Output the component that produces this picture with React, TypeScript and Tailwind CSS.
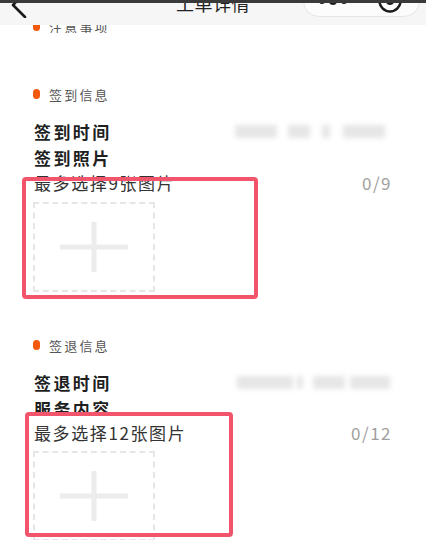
import React from 'react';

const FONT = { fontFamily: '"Noto Sans CJK SC", "Noto Sans", sans-serif' };

const Dot = () => <span className="w-[7px] h-[10px] rounded-full bg-[#f2590c] shrink-0" />;

const SectionLabel: React.FC<{ text: string }> = ({ text }) => (
  <div className="h-[14px] flex items-center gap-[9px] pl-[33px]">
    <Dot />
    <span className="text-[13px] leading-none tracking-[2.2px] text-[#555]">{text}</span>
  </div>
);

const Blurred: React.FC<{ parts: [number, number][] }> = ({ parts }) => (
  <div className="flex items-center blur-[2.5px]">
    {parts.map(([gap, w], i) => (
      <div key={i} className="h-[13px] bg-[#e6e6e6]" style={{ width: w, marginLeft: gap }} />
    ))}
  </div>
);

const FieldRow: React.FC<{ label: string; value?: [number, number][]; right?: string }> = ({ label, value, right = 'pr-[40px]' }) => (
  <div className={`h-[26px] flex items-center justify-between pl-[34px] ${right}`}>
    <span className="text-[17px] leading-none font-bold tracking-[2.4px] text-[#1f1f1f]">{label}</span>
    {value && <Blurred parts={value} />}
  </div>
);

const UploadHint: React.FC<{ max: number }> = ({ max }) => (
  <div className="h-[24px] flex items-center justify-between pl-[34px] pr-[34px]">
    <span className="text-[17px] leading-none tracking-[1.6px] text-[#333]">最多选择{max}张图片</span>
    <span className="text-[17px] leading-none tracking-[1.5px] text-[#a0a0a0]">0/{max}</span>
  </div>
);

const UploadBox = () => (
  <div className="ml-[33px] w-[122px] h-[90px] border-2 border-dashed border-[#e6e6e6] flex items-center justify-center">
    <svg width="68" height="50" viewBox="0 0 68 50">
      <rect x="0" y="22.5" width="68" height="5" fill="#ececec" />
      <rect x="31.5" y="0" width="5" height="50" fill="#ececec" />
    </svg>
  </div>
);

export default function App() {
  return (
    <div className="relative w-[426px] h-[540px] overflow-hidden bg-white" style={FONT}>
      <div className="h-[3px] bg-[#3a3a3a]" />

      {/* nav bar, scrolled partly out of view */}
      <header className="h-[22px] overflow-hidden bg-[#f6f6f6] flex items-end relative z-10">
        <div className="h-[44px] w-full shrink-0 grid grid-cols-[1fr_auto_1fr] items-center">
          <div className="pl-[10px]">
            <svg width="20" height="30" viewBox="0 0 20 30">
              <path d="M15 5 L3 17 L15 29" fill="none" stroke="#1a1a1a" strokeWidth="2.6" strokeLinecap="round" strokeLinejoin="round" />
            </svg>
          </div>
          <span className="text-[18px] tracking-[0.5px] leading-none text-[#222]">工单详情</span>
          <div className="flex justify-end self-end mb-[8px] pr-[6px]">
            <div className="w-[117px] h-[32px] rounded-full border border-[#e6e6e6] bg-[#fcfcfc] flex items-center justify-between pl-[14px] pr-[16px]">
              <svg width="30" height="10" viewBox="0 0 30 10">
                <circle cx="4" cy="5" r="3" fill="#1a1a1a" />
                <circle cx="15" cy="5" r="4" fill="#1a1a1a" />
                <circle cx="26" cy="5" r="3" fill="#1a1a1a" />
              </svg>
              <svg width="26" height="26" viewBox="0 0 26 26">
                <circle cx="13" cy="13" r="10.5" fill="none" stroke="#1a1a1a" strokeWidth="2.5" />
                <circle cx="13" cy="13" r="4" fill="#1a1a1a" />
              </svg>
            </div>
          </div>
        </div>
      </header>

      {/* 注意事项, partly under the nav bar */}
      <div className="h-[8px] overflow-hidden flex items-end">
        <div className="h-[14px] shrink-0 w-full">
          <SectionLabel text="注意事项" />
        </div>
      </div>

      <div className="mt-[54px]">
        <SectionLabel text="签到信息" />
      </div>
      <div className="mt-[17px]">
        <FieldRow label="签到时间" value={[[0, 42], [11, 22], [12, 8], [13, 42]]} right="pr-[41px]" />
        <FieldRow label="签到照片" />
        <UploadHint max={9} />
      </div>
      <div className="mt-[8px]">
        <UploadBox />
      </div>

      <div className="mt-[46px]">
        <SectionLabel text="签退信息" />
      </div>
      <div className="mt-[17px]">
        <FieldRow label="签退时间" value={[[0, 56], [4, 6], [10, 32], [5, 40]]} right="pr-[36px]" />
      </div>
      <div className="h-[19px] overflow-hidden">
        <FieldRow label="服务内容" />
      </div>
      <div className="mt-[6px]">
        <UploadHint max={12} />
      </div>
      <div className="mt-[7px]">
        <UploadBox />
      </div>

      {/* annotation frames */}
      <div className="absolute left-[22px] top-[177px] w-[236px] h-[122px] border-4 border-[#f2546b] rounded-[4px]" />
      <div className="absolute left-[25px] top-[412px] w-[208px] h-[125px] border-4 border-[#f2546b] rounded-[4px]" />
    </div>
  );
}
